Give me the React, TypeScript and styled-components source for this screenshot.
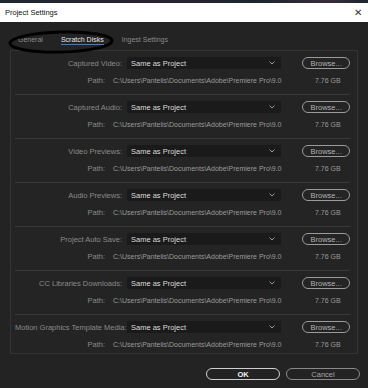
import React from 'react'
import styled, { createGlobalStyle } from 'styled-components'

const GlobalStyle = createGlobalStyle`
  html, body {
    margin: 0;
    padding: 0;
    background: #232323;
  }
  body {
    font-family: 'Liberation Sans', Arial, sans-serif;
    width: 368px;
    height: 388px;
    overflow: hidden;
  }
`

const Window = styled.div`
  width: 368px;
  height: 388px;
  display: flex;
  flex-direction: column;
  position: relative;
  background: #232323;
`

const TopStrip = styled.div`
  height: 3px;
  background: linear-gradient(90deg, #1d2833 0%, #2a2331 40%, #1c2630 70%, #3a2c3c 90%, #1d2530 100%);
`

const TitleBar = styled.div`
  height: 19px;
  background: #ffffff;
  display: flex;
  align-items: center;
  justify-content: space-between;
  padding: 0 6px 0 5px;
  font-size: 7.5px;
  color: #111;
`

const Close = styled.span`
  font-size: 10px;
  color: #333;
  line-height: 1;
`

const Tabs = styled.div`
  height: 28px;
  display: flex;
  align-items: center;
  gap: 18px;
  padding: 8px 0 0 18px;
  box-sizing: border-box;
  font-size: 7px;
`

const Tab = styled.span<{ $active?: boolean }>`
  color: ${p => (p.$active ? '#e6e6e6' : '#8a8a8a')};
  padding-bottom: 1px;
  border-bottom: 1px solid ${p => (p.$active ? '#3b7bd6' : 'transparent')};
  margin-top: 1px;
`

const Panel = styled.div`
  margin: 0 10px 0 10px;
  border: 1px solid #333;
  box-sizing: border-box;
  background: #242424;
  display: flex;
  flex-direction: column;
  padding-left: 4px;
  padding-right: 7px;
`

const Section = styled.div<{ $last?: boolean }>`
  display: flex;
  flex-direction: column;
  gap: 3px;
  padding: ${p => (p.$last ? '5px 0 2px' : '5px 0 7px')};
  border-bottom: ${p => (p.$last ? 'none' : '1px solid #3a3a3a')};
`

const Row = styled.div`
  height: 14px;
  display: flex;
  align-items: center;
  font-size: 7.5px;
`

const Label = styled.span<{ $w: number }>`
  width: ${p => p.$w}px;
  text-align: right;
  color: #8a8a8a;
  white-space: nowrap;
  flex-shrink: 0;
`

const Select = styled.div`
  margin-left: 5px;
  width: 155px;
  height: 12px;
  background: #1a1a1a;
  display: flex;
  align-items: center;
  justify-content: space-between;
  padding: 0 6px 0 4px;
  box-sizing: border-box;
  color: #dcdcdc;
  font-size: 7.5px;
`

const Chevron = styled.svg`
  width: 6px;
  height: 4px;
`

const Browse = styled.div`
  margin-left: 21px;
  width: 48px;
  height: 12px;
  border: 1px solid #9a9a9a;
  border-radius: 7px;
  box-sizing: border-box;
  display: flex;
  align-items: center;
  justify-content: center;
  color: #b0b0b0;
  font-size: 7.5px;
`

const PathText = styled.span`
  margin-left: 8px;
  width: 202px;
  color: #9a9a9a;
  white-space: nowrap;
  overflow: hidden;
  font-size: 7px;
`

const Size = styled.span`
  color: #9a9a9a;
  font-size: 7px;
`

const Footer = styled.div`
  flex: 1;
  display: flex;
  align-items: center;
  justify-content: flex-end;
  gap: 6px;
  padding: 6px 8px 0 0;
`

const FooterButton = styled.div<{ $primary?: boolean }>`
  width: 74px;
  height: 12px;
  border: 1px solid ${p => (p.$primary ? '#cfcfcf' : '#8a8a8a')};
  border-radius: 7px;
  box-sizing: border-box;
  display: flex;
  align-items: center;
  justify-content: center;
  color: ${p => (p.$primary ? '#f2f2f2' : '#a8a8a8')};
  font-weight: ${p => (p.$primary ? 'bold' : 'normal')};
  font-size: 7.5px;
`

const Annotation = styled.svg`
  position: absolute;
  left: 0;
  top: 0;
  pointer-events: none;
`

const disks = [
  'Captured Video:',
  'Captured Audio:',
  'Video Previews:',
  'Audio Previews:',
  'Project Auto Save:',
  'CC Libraries Downloads:',
  'Motion Graphics Template Media:',
]

const path = 'C:\\Users\\Pantelis\\Documents\\Adobe\\Premiere Pro\\9.0'

function App() {
  return (
    <>
      <GlobalStyle />
      <Window>
        <TopStrip />
        <TitleBar>
          <span>Project Settings</span>
          <Close>✕</Close>
        </TitleBar>
        <Tabs>
          <Tab>General</Tab>
          <Tab $active>Scratch Disks</Tab>
          <Tab>Ingest Settings</Tab>
        </Tabs>
        <Panel>
          {disks.map((name, i) => (
            <Section key={name} $last={i === disks.length - 1}>
              <Row>
                <Label $w={107}>{name}</Label>
                <Select>
                  <span>Same as Project</span>
                  <Chevron viewBox="0 0 6 4">
                    <path d="M0.5 0.5 L3 3 L5.5 0.5" stroke="#9a9a9a" strokeWidth="1" fill="none" />
                  </Chevron>
                </Select>
                <Browse>Browse...</Browse>
              </Row>
              <Row>
                <Label $w={90}>Path:</Label>
                <PathText>{path}</PathText>
                <Size>7.76 GB</Size>
              </Row>
            </Section>
          ))}
        </Panel>
        <Footer>
          <FooterButton $primary>OK</FooterButton>
          <FooterButton>Cancel</FooterButton>
        </Footer>
        <Annotation width="368" height="388" viewBox="0 0 368 388">
          <ellipse
            cx="61"
            cy="42"
            rx="51"
            ry="10"
            transform="rotate(-1.5 61 42)"
            fill="none"
            stroke="#000"
            strokeWidth="3"
          />
        </Annotation>
      </Window>
    </>
  )
}

export default App
